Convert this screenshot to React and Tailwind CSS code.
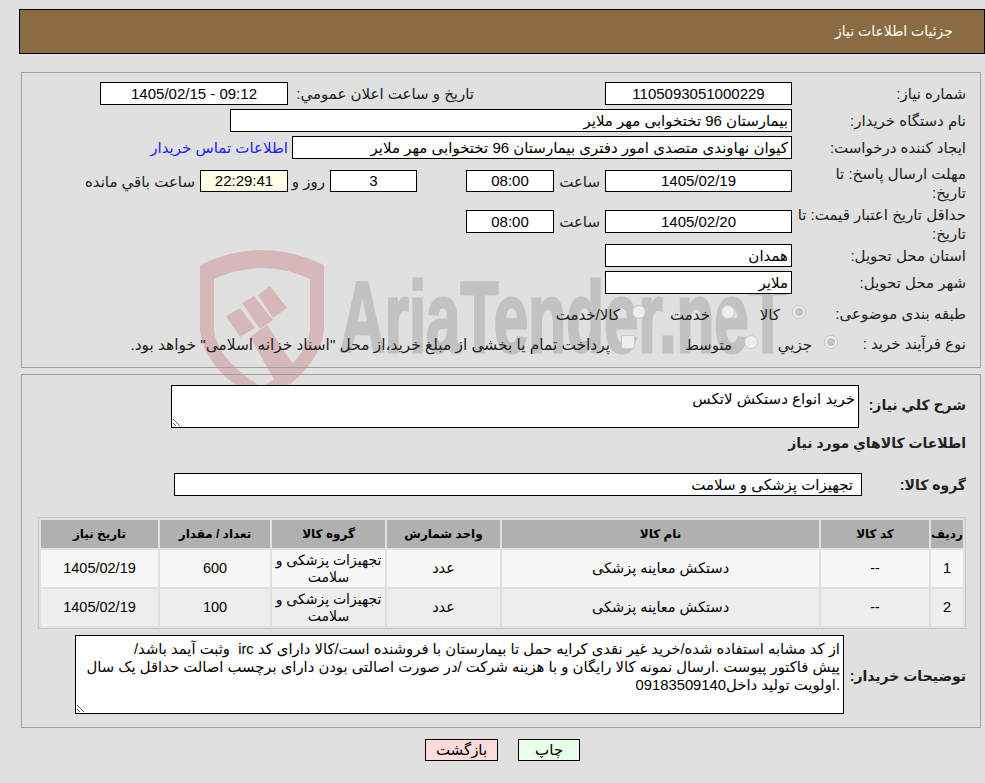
const FONT = "font-['Liberation_Sans','DejaVu_Sans',sans-serif]";

const box = 'h-[23px] shrink-0 border border-black bg-white px-[3px] text-[15px] leading-[21px] text-black';
const plain = 'whitespace-nowrap text-[15px] leading-[19px] text-[#222]';
const strong = 'whitespace-nowrap text-[14px] font-bold leading-[20px] text-[#222]';

function Field({ className = '', center, children }) {
  return <div className={`${box} ${center ? 'text-center' : 'text-right'} ${className}`}>{children}</div>;
}

function Label({ className = 'w-[174px]', children }) {
  return <div className={`${plain} shrink-0 ${className}`}>{children}</div>;
}

function Radio({ className = '' }) {
  return (
    <span className={`flex h-[14px] w-[14px] shrink-0 items-center justify-center rounded-full border border-[#c4c4c4] bg-[#eeeeee] ${className}`}>
      <span className="h-[8px] w-[8px] rounded-full bg-[#c4c4c4]" />
    </span>
  );
}

function EmptyRadio({ className = '' }) {
  return <span className={`h-[14px] w-[14px] shrink-0 rounded-full border border-[#c8c8c8] bg-[#eeeeee] ${className}`} />;
}

// faded logo behind the form
function Watermark() {
  return (
    <svg dir="ltr" className="pointer-events-none absolute left-[195px] top-[245px]" width="620" height="145" viewBox="0 0 620 145">
      <path d="M5 20 Q67 -10 129 20 L129 85 Q125 125 67 158 Q9 125 5 85 Z M19 34 L19 85 Q22 115 67 142 Q112 115 115 85 L115 34 Q67 12 19 34 Z" fill="#d6b8ba" fillRule="evenodd" />
      <path d="M31 71 L45 63 L60 83 L45 92 Z M47 58 L59 51 L78 75 L65 84 Z M63 50 L75 41 L92 63 L78 73 Z M55 92 L72 80 L105 130 L85 145 Z" fill="#d6b8ba" />
      <text transform="translate(145 107) scale(0.62 1)" direction="ltr" fontFamily="'Liberation Sans', sans-serif" fontWeight="700" fontSize="100" fill="#c2c2c2" stroke="#c2c2c2" strokeWidth="3">AriaTender.neT</text>
    </svg>
  );
}

const rows = [
  { id: 1, qty: 600 },
  { id: 2, qty: 100 },
];

export default function App() {
  return (
    <div dir="rtl" className={`relative h-[783px] w-[985px] overflow-hidden bg-[#e0e0e0] pt-[9px] ${FONT}`}>
      <Watermark />

      <div className="relative flex h-[45px] w-[966px] items-center border border-black bg-[#8b6b42] pr-[31px] text-[14px] text-white">
        جزئیات اطلاعات نیاز
      </div>

      {/* top form */}
      <div className="relative mr-[4px] mt-[18px] h-[296px] w-[960px] border border-[#a0a0a0] pr-[14px] pt-[9px]">
        <div className="flex h-[27px] items-start">
          <Label className="w-[174px] pt-[2px]">شماره نیاز:</Label>
          <Field center className="w-[187px]">1105093051000229</Field>
          <div className={`${plain} mr-[131px] w-[186px] pt-[2px]`}>تاریخ و ساعت اعلان عمومي:</div>
          <Field center className="w-[188px]">09:12 - 1405/02/15</Field>
        </div>
        <div className="flex h-[27px] items-start">
          <Label className="w-[174px] pt-[2px]">نام دستگاه خریدار:</Label>
          <Field className="w-[562px]">بیمارستان 96 تختخوابی مهر ملایر</Field>
        </div>
        <div className="flex h-[34px] items-start">
          <Label className="w-[174px] pt-[2px]">ایجاد کننده درخواست:</Label>
          <Field className="w-[500px]">کیوان نهاوندی متصدی امور دفتری بیمارستان 96 تختخوابی مهر ملایر</Field>
          <a className="mr-[4px] whitespace-nowrap pt-[2px] text-[15px] leading-[19px] text-[#2222ee]">اطلاعات تماس خریدار</a>
        </div>
        <div className="flex h-[40px] items-start">
          <Label className="-mt-[6px] w-[174px]">مهلت ارسال پاسخ: تا<br />تاریخ:</Label>
          <Field center className="w-[187px] !h-[22px] !leading-[20px]">1405/02/19</Field>
          <div className={`${plain} w-[51px] pr-[5px] pt-[2px]`}>ساعت</div>
          <Field center className="w-[88px] !h-[22px] !leading-[20px]">08:00</Field>
          <Field center className="mr-[49px] w-[87px] !h-[22px] !leading-[20px]">3</Field>
          <div className={`${plain} w-[42px] pr-[5px] pt-[2px]`}>روز و</div>
          <Field center className="w-[88px] !h-[22px] !bg-[#ffffe8] !leading-[20px]">22:29:41</Field>
          <div className={`${plain} mr-[5px] pt-[2px]`}>ساعت باقي مانده</div>
        </div>
        <div className="flex h-[34px] items-start">
          <Label className="-mt-[5px] w-[174px]">حداقل تاریخ اعتبار قیمت: تا<br />تاریخ:</Label>
          <Field center className="w-[187px]">1405/02/20</Field>
          <div className={`${plain} w-[51px] pr-[5px] pt-[2px]`}>ساعت</div>
          <Field center className="w-[88px]">08:00</Field>
        </div>
        <div className="flex h-[27px] items-start">
          <Label className="w-[174px] pt-[2px]">استان محل تحویل:</Label>
          <Field className="w-[187px]">همدان</Field>
        </div>
        <div className="flex h-[31px] items-start">
          <Label className="w-[174px] pt-[2px]">شهر محل تحویل:</Label>
          <Field className="w-[187px]">ملایر</Field>
        </div>
        <div className={`flex h-[30px] items-start ${plain}`}>
          <Label className="w-[160px] pt-[2px]">طبقه بندی موضوعی:</Label>
          <Radio className="mt-[3px]" />
          <span className="mr-[12px] w-[45px] pt-[3px]">کالا</span>
          <EmptyRadio className="mt-[3px]" />
          <span className="mr-[11px] w-[64px] pt-[3px]">خدمت</span>
          <EmptyRadio className="mt-[3px]" />
          <span className="mr-[12px] pt-[3px]">کالا/خدمت</span>
        </div>
        <div className={`flex h-[24px] items-start ${plain}`}>
          <Label className="w-[128px] pt-[2px]">نوع فرآیند خرید :</Label>
          <Radio className="mt-[3px]" />
          <span className="mr-[12px] w-[54px] pt-[3px]">جزيي</span>
          <EmptyRadio className="mt-[3px]" />
          <span className="mr-[12px] w-[97px] pt-[3px]">متوسط</span>
          <span className="mt-[3px] h-[14px] w-[14px] shrink-0 rounded-[2px] border border-[#c8c8c8] bg-[#eeeeee]" />
          <span className="mr-[11px] pt-[3px] text-[15.4px]">پرداخت تمام یا بخشی از مبلغ خرید،از محل "اسناد خزانه اسلامی" خواهد بود.</span>
        </div>
      </div>

      {/* details */}
      <div className="relative mr-[4px] mt-[6px] h-[354px] w-[960px] border border-[#a0a0a0] pr-[14px] pt-[10px]">
        <div className="flex h-[48px] items-start">
          <div className={`${strong} w-[107px] shrink-0 pt-[10px] text-[14.5px]`}>شرح كلي نیاز:</div>
          <textarea
            readOnly
            dir="rtl"
            defaultValue="خرید انواع دستکش لاتکس"
            className="h-[43px] w-[688px] border border-black bg-white px-[3px] pt-[4px] text-[15px] leading-[18px] text-black outline-none"
          />
        </div>
        <div className={`${strong} h-[40px]`}>اطلاعات كالاهاي مورد نياز</div>
        <div className="flex h-[44px] items-start">
          <div className={`${strong} w-[104px] shrink-0 pt-[2px]`}>گروه کالا:</div>
          <Field className="w-[688px] !pr-[8px]">تجهیزات پزشکی و سلامت</Field>
        </div>
        <table className="w-[928px] table-fixed border-separate border-spacing-[2px] border border-[#c8c8c8] text-[14.5px] text-black">
          <colgroup>
            <col className="w-[32px]" />
            <col className="w-[108px]" />
            <col className="w-[317px]" />
            <col className="w-[113px]" />
            <col className="w-[113px]" />
            <col className="w-[110px]" />
            <col className="w-[117px]" />
          </colgroup>
          <thead>
            <tr className="h-[28px] bg-[#b0b0b0] text-[12px] font-bold">
              <th>ردیف</th>
              <th>کد کالا</th>
              <th>نام کالا</th>
              <th>واحد شمارش</th>
              <th>گروه کالا</th>
              <th>تعداد / مقدار</th>
              <th>تاریخ نیاز</th>
            </tr>
          </thead>
          <tbody>
            {rows.map((row, i) => (
              <tr key={row.id} className={`h-[37px] text-center leading-[17px] ${i === 0 ? 'bg-[#f7f7f7]' : 'bg-[#eeeeee]'}`}>
                <td>{row.id}</td>
                <td>--</td>
                <td>دستکش معاینه پزشکی</td>
                <td>عدد</td>
                <td className="text-[14px]">تجهیزات پزشکی و سلامت</td>
                <td>{row.qty}</td>
                <td>1405/02/19</td>
              </tr>
            ))}
          </tbody>
        </table>
        <div className="mt-[6px] flex items-start">
          <div className={`${strong} w-[122px] shrink-0 pt-[31px]`}>توضیحات خریدار:</div>
          <textarea
            readOnly
            dir="rtl"
            wrap="off"
            defaultValue={'از کد مشابه استفاده شده/خرید غیر نقدی کرایه حمل تا بیمارستان با فروشنده است/کالا دارای کد irc  وثبت آیمد باشد/\nپیش فاکتور پیوست .ارسال نمونه کالا رایگان و با هزینه شرکت /در صورت اصالتی بودن دارای برچسب اصالت حداقل یک سال\n.اولویت تولید داخل09183509140'}
            className="h-[79px] w-[769px] overflow-hidden border border-black bg-white px-[3px] pt-[4px] text-[14.8px] leading-[18px] text-black outline-none"
          />
        </div>
      </div>

      <div className="relative mt-[11px] flex justify-center gap-[20px] pl-[20px]">
        <button className="h-[22px] w-[62px] border border-black bg-[#e8ffe8] text-[15px] leading-[18px] text-black">چاپ</button>
        <button className="h-[22px] w-[73px] border border-black bg-[#ffdcdc] text-[15px] leading-[18px] text-black">بازگشت</button>
      </div>
    </div>
  );
}
